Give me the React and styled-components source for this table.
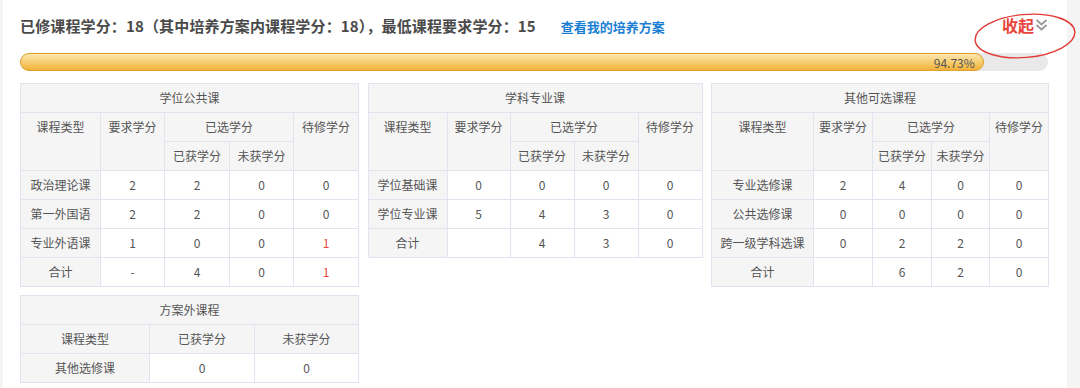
import React from 'react';
import styled, { createGlobalStyle } from 'styled-components';

const Global = createGlobalStyle`
  html, body { margin: 0; padding: 0; background: #f4f4f4; }
  body { font-family: "Noto Sans CJK SC", "Microsoft YaHei", "Noto Sans", sans-serif; }
`;

const Page = styled.div`
  width: 1080px;
  height: 388px;
  background: #f4f4f4;
  overflow: hidden;
  display: flex;
`;

const Panel = styled.div`
  position: relative;
  margin-left: 3px;
  width: 1064px;
  background: #fff;
  padding: 14px 19px 0 17px;
  box-sizing: border-box;
`;

const Header = styled.div`
  display: flex;
  align-items: baseline;
  height: 22px;
  line-height: 22px;
`;

const Title = styled.span`
  font-size: 15px;
  font-weight: bold;
  color: #4a4a4a;
  letter-spacing: 0.14px;
`;

const PlanLink = styled.a`
  margin-left: 25px;
  font-size: 13px;
  font-weight: bold;
  color: #1a7fd4;
  text-decoration: none;
`;

const Collapse = styled.span`
  margin-left: auto;
  display: flex;
  align-items: center;
  font-size: 16px;
  font-weight: bold;
  color: #e8453c;
  gap: 1px;
`;

const Annotation = styled.svg`
  position: absolute;
  left: 966px;
  top: 10px;
  pointer-events: none;
`;

const Track = styled.div`
  margin-top: 17px;
  height: 18px;
  border-radius: 9px;
  background: #e9e9e9;
`;

const Fill = styled.div`
  height: 100%;
  box-sizing: border-box;
  border: 1px solid #e0a229;
  border-radius: 9px;
  background: linear-gradient(#fce6b0, #f7cd72 50%, #f1b138);
  display: flex;
  justify-content: flex-end;
  align-items: center;
  padding-right: 8px;
  font-size: 12px;
  color: #555;
`;

const Grid = styled.div`
  margin-top: 12px;
  display: grid;
  grid-template-columns: 338px 334px 337px;
  justify-content: space-between;
  row-gap: 8px;
  align-items: start;
`;

const Table = styled.table`
  width: 100%;
  border-collapse: collapse;
  table-layout: fixed;
  font-size: 12px;
  color: #555;
`;

const Row = styled.tr`
  height: 29px;
`;

const Th = styled.th`
  border: 1px solid #e0e4ee;
  background: #f5f5f5;
  font-weight: normal;
  padding: 0;
  text-align: center;
  vertical-align: ${p => (p.$top ? 'top' : 'middle')};
  line-height: 28px;
  white-space: nowrap;
`;

const Td = styled.td`
  border: 1px solid #e0e4ee;
  background: ${p => (p.$label ? '#f5f5f5' : '#fff')};
  color: ${p => (p.$alert ? '#e8453c' : '#555')};
  padding: 0;
  text-align: center;
  line-height: 28px;
  white-space: nowrap;
`;

const Chevrons = () => (
  <svg width="13" height="14" viewBox="0 0 13 14">
    <path d="M1.5 2 L6.5 6.5 L11.5 2" fill="none" stroke="#9a9a9a" strokeWidth="1.8" />
    <path d="M1.5 7 L6.5 11.5 L11.5 7" fill="none" stroke="#9a9a9a" strokeWidth="1.8" />
  </svg>
);

const creditTables = [
  {
    title: '学位公共课',
    cols: [80, 64, 65, 64, 65],
    rows: [
      ['政治理论课', '2', '2', '0', '0'],
      ['第一外国语', '2', '2', '0', '0'],
      ['专业外语课', '1', '0', '0', '1'],
      ['合计', '-', '4', '0', '1'],
    ],
  },
  {
    title: '学科专业课',
    cols: [79, 63, 64, 64, 64],
    rows: [
      ['学位基础课', '0', '0', '0', '0'],
      ['学位专业课', '5', '4', '3', '0'],
      ['合计', '', '4', '3', '0'],
    ],
  },
  {
    title: '其他可选课程',
    cols: [102, 59, 59, 58, 59],
    rows: [
      ['专业选修课', '2', '4', '0', '0'],
      ['公共选修课', '0', '0', '0', '0'],
      ['跨一级学科选课', '0', '2', '2', '0'],
      ['合计', '', '6', '2', '0'],
    ],
  },
];

const CreditTable = ({ title, cols, rows }) => (
  <Table>
    <colgroup>
      {cols.map((w, i) => (
        <col key={i} style={{ width: w }} />
      ))}
    </colgroup>
    <thead>
      <Row>
        <Th colSpan={5}>{title}</Th>
      </Row>
      <Row>
        <Th rowSpan={2} $top>课程类型</Th>
        <Th rowSpan={2} $top>要求学分</Th>
        <Th colSpan={2}>已选学分</Th>
        <Th rowSpan={2} $top>待修学分</Th>
      </Row>
      <Row>
        <Th>已获学分</Th>
        <Th>未获学分</Th>
      </Row>
    </thead>
    <tbody>
      {rows.map((r, i) => (
        <Row key={i}>
          <Td $label>{r[0]}</Td>
          <Td>{r[1]}</Td>
          <Td>{r[2]}</Td>
          <Td>{r[3]}</Td>
          <Td $alert={r[4] !== '0'}>{r[4]}</Td>
        </Row>
      ))}
    </tbody>
  </Table>
);

const OutsideTable = () => (
  <Table>
    <colgroup>
      <col style={{ width: 129 }} />
      <col style={{ width: 105 }} />
      <col style={{ width: 104 }} />
    </colgroup>
    <thead>
      <Row>
        <Th colSpan={3}>方案外课程</Th>
      </Row>
      <Row>
        <Th>课程类型</Th>
        <Th>已获学分</Th>
        <Th>未获学分</Th>
      </Row>
    </thead>
    <tbody>
      <Row>
        <Td $label>其他选修课</Td>
        <Td>0</Td>
        <Td>0</Td>
      </Row>
    </tbody>
  </Table>
);

export default function App() {
  const pct = 94.73;
  return (
    <>
      <Global />
      <Page>
        <Panel>
          <Header>
            <Title>已修课程学分：18（其中培养方案内课程学分：18），最低课程要求学分：15</Title>
            <PlanLink href="#">查看我的培养方案</PlanLink>
            <Collapse>
              收起
              <Chevrons />
            </Collapse>
          </Header>
          <Annotation width="112" height="54" viewBox="0 0 112 54">
            <ellipse
              cx="56"
              cy="26"
              rx="50"
              ry="21.5"
              fill="none"
              stroke="#e33a35"
              strokeWidth="1.4"
              transform="rotate(-5 56 26)"
            />
          </Annotation>
          <Track>
            <Fill style={{ width: `calc(${pct}% - 10px)` }}>{pct}%</Fill>
          </Track>
          <Grid>
            {creditTables.map(t => (
              <CreditTable key={t.title} {...t} />
            ))}
            <OutsideTable />
          </Grid>
        </Panel>
      </Page>
    </>
  );
}
